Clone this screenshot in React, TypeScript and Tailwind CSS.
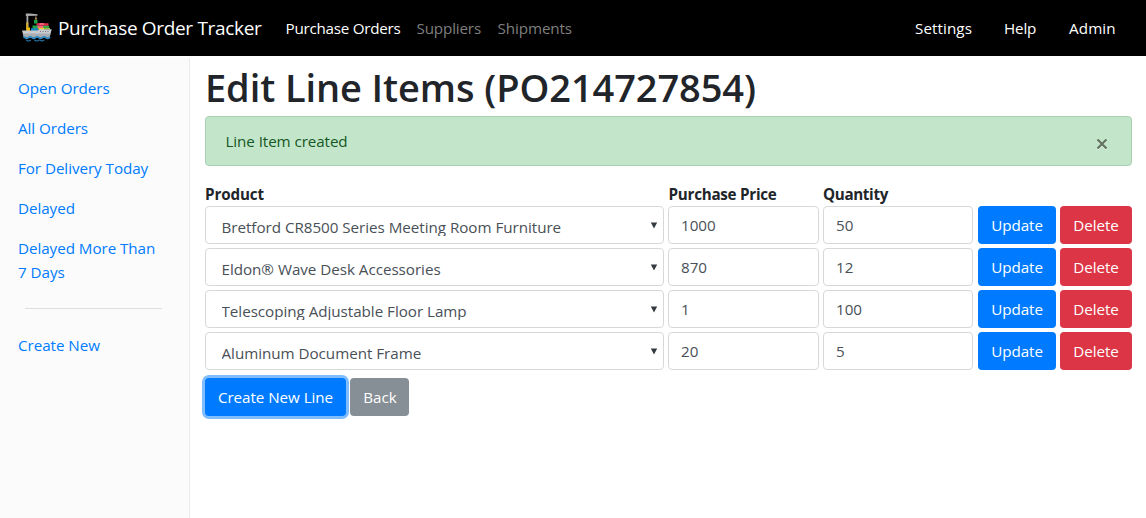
import clsx from "clsx";

const sidebarLinks = ["Open Orders", "All Orders", "For Delivery Today", "Delayed", "Delayed More Than 7 Days"];

const lineItems = [
  { product: "Bretford CR8500 Series Meeting Room Furniture", price: "1000", quantity: "50" },
  { product: "Eldon® Wave Desk Accessories", price: "870", quantity: "12" },
  { product: "Telescoping Adjustable Floor Lamp", price: "1", quantity: "100" },
  { product: "Aluminum Document Frame", price: "20", quantity: "5" },
];

const fieldClass = "h-[38px] rounded border border-[#d6d8da] bg-white text-[#495057]";
const buttonClass = "h-[38px] rounded text-center leading-[38px] text-white";

function ShipLogo() {
  return (
    <svg width="30" height="30" viewBox="0 0 30 30" aria-hidden="true">
      <rect x="4.5" y="1.5" width="1.8" height="18" fill="#a8a8a8" />
      <rect x="4.2" y="9.500" width="2.2" height="7" fill="#d9ae38" />
      <path d="M3.800 0.5h4l7.700.8v1.400L3.800 3z" fill="#a9a9a9" />
      <path d="M13.8 2.5v6" stroke="#777" strokeWidth="0.8" />
      <path d="M14 3.5l1.300 3h-2.600z" fill="#b9954a" />
      <rect x="12" y="7" width="3.500" height="3.500" fill="#18a54a" />
      <path d="M14.5 10.2h12v2.600h-12z" fill="#e52b50" />
      <path d="M17.5 10.2h4.500v1.500h-4.500z" fill="#ff7186" />
      <path d="M10.500 12.500h6v3.500h-6z" fill="#20a449" />
      <path d="M15.5 12.8h6v2.600h-6z" fill="#f4657c" />
      <path d="M21 12.8h6v2h-6z" fill="#38b34d" />
      <path d="M4.500 14.500h3.500v3.500h-3.500z" fill="#f5b800" />
      <path d="M9 15.200h7.500V18h-7.500z" fill="#1686bf" />
      <path d="M16.5 14.8h5.500v2.400h-5.500z" fill="#f3c52e" />
      <path d="M22 14.8h6v1.500h-6z" fill="#8cc63f" />
      <path d="M0 17.5h15.500l2.500-1.300h11.700L27.500 24.500H2z" fill="#c9cccf" />
      <path d="M1 20.5h27.500l-1 4h-25.500z" fill="#a9adb1" />
      <path d="M18 18.500h1M20.500 18.500h1M23 18.500h1M25.500 18.500h1" stroke="#727980" strokeWidth="1" />
      <path
        d="M1.200 23.800c1.800 0 1.800 1.600 3.500 1.600s1.800-1.600 3.500-1.600 1.800 1.600 3.500 1.600 1.800-1.600 3.500-1.600 1.800 1.600 3.500 1.600 1.800-1.600 3.500-1.600 1.800 1.600 3.500 1.600 1.500-1 2.500-1.300"
        fill="none"
        stroke="#2b8ac4"
        strokeWidth="1.8"
      />
      <path
        d="M4 27c1 0 1.300 1 2.500 1s1.500-1 2.500-1M12 27c1.100 0 1.500 1 2.700 1s1.600-1 2.700-1 1.500 1 2.600 1 1.300-1 2.500-1"
        fill="none"
        stroke="#256f9d"
        strokeWidth="1.2"
      />
    </svg>
  );
}

export default function App() {
  return (
    <div className="flex h-[518px] w-[1146px] flex-col overflow-hidden bg-white font-['Open_Sans','Noto_Sans',sans-serif] text-[15.2px] leading-6 tracking-[-0.05px] text-[#212529]">
      <header className="flex h-14 shrink-0 items-center bg-black pl-[22px] pr-[30px] text-white">
        <ShipLogo />
        <span className="ml-[6px] w-[227.5px] whitespace-nowrap text-[19px] tracking-[-0.33px]">Purchase Order Tracker</span>
        <nav className="flex grow items-center whitespace-nowrap text-[#7f7f7f]">
          <a className="w-[131px] tracking-[-0.25px] text-white">Purchase Orders</a>
          <a className="w-[81px] tracking-[-0.15px]">Suppliers</a>
          <a className="tracking-[-0.09px]">Shipments</a>
        </nav>
        <nav className="flex gap-8 whitespace-nowrap">
          <a className="w-[57px] tracking-[0.09px]">Settings</a>
          <a className="w-[33px] tracking-[-0.15px]">Help</a>
          <a className="w-[47px] tracking-[0.12px]">Admin</a>
        </nav>
      </header>

      <div className="flex grow">
        <aside className="mt-[2px] w-[190px] shrink-0 border-r border-[#ebebeb] bg-[#fbfbfb] pt-[10px] text-[#007bff]">
          {sidebarLinks.map((label) => (
            <a key={label} className="block py-2 pl-[18px] pr-[30px]">
              {label}
            </a>
          ))}
          <hr className="mb-4 ml-[25px] mr-[27px] mt-4 border-[#dedede]" />
          <a className="block py-2 pl-[18px]">Create New</a>
        </aside>

        <main className="w-[942px] pl-[15px]">
          <h1 className="mt-[7px] h-[53px] whitespace-nowrap text-[38px] font-semibold leading-[48px] tracking-[-0.09px]">
            Edit Line Items (PO214727854)
          </h1>
          <div className="flex h-[50px] items-center justify-between rounded border border-[#a9cfb3] bg-[#c3e6cb] pl-[19.5px] pr-[23px] text-[#155724]">
            <span className="tracking-[-0.08px]">Line Item created</span>
            <button aria-label="Close" className="pt-[5px]">
              <svg width="12" height="12" viewBox="0 0 12 12" aria-hidden="true">
                <path d="M1.500 2.500l9 9M10.500 2.500l-9 9" stroke="#fff" strokeOpacity=".6" strokeWidth="2" />
                <path d="M1.500 1.500l9 9M10.500 1.500l-9 9" stroke="#62735f" strokeWidth="2.2" />
              </svg>
            </button>
          </div>

          <div className="mt-4 grid h-6 grid-cols-[463.5px_154.5px_1fr] whitespace-nowrap font-bold">
            <span className="tracking-[-0.12px]">Product</span>
            <span className="tracking-[-0.26px]">Purchase Price</span>
            <span className="tracking-[-0.34px]">Quantity</span>
          </div>
          <div className="flex flex-col gap-1">
            {lineItems.map((item) => (
              <div key={item.product} className="flex">
                <div className={clsx(fieldClass, "flex w-[459px] justify-between pl-[15.5px] pr-[5px]")}>
                  <span className="h-[29px] overflow-hidden whitespace-nowrap pt-[8px] tracking-[-0.03px]">{item.product}</span>
                  <svg className="mt-[15px]" width="8" height="7" viewBox="0 0 8 7" aria-hidden="true">
                    <path d="M.8.500h6.400L4 6.500z" fill="#343a40" />
                  </svg>
                </div>
                <div className={clsx(fieldClass, "ml-1 w-[151px] pl-3 leading-[37px]")}>{item.price}</div>
                <div className={clsx(fieldClass, "ml-1 w-[150px] pl-3 leading-[37px]")}>{item.quantity}</div>
                <button className={clsx(buttonClass, "ml-[5px] w-[78px] bg-[#007bff]")}>Update</button>
                <button className={clsx(buttonClass, "ml-1 w-[72px] bg-[#dc3545]")}>Delete</button>
              </div>
            ))}
          </div>
          <div className="mt-2 flex gap-1">
            <button className={clsx(buttonClass, "w-[141px] bg-[#007bff] shadow-[0_0_0_3px_#80bdff]")}>Create New Line</button>
            <button className={clsx(buttonClass, "w-[59px] bg-[#868e96] pl-px")}>Back</button>
          </div>
        </main>
      </div>
    </div>
  );
}
